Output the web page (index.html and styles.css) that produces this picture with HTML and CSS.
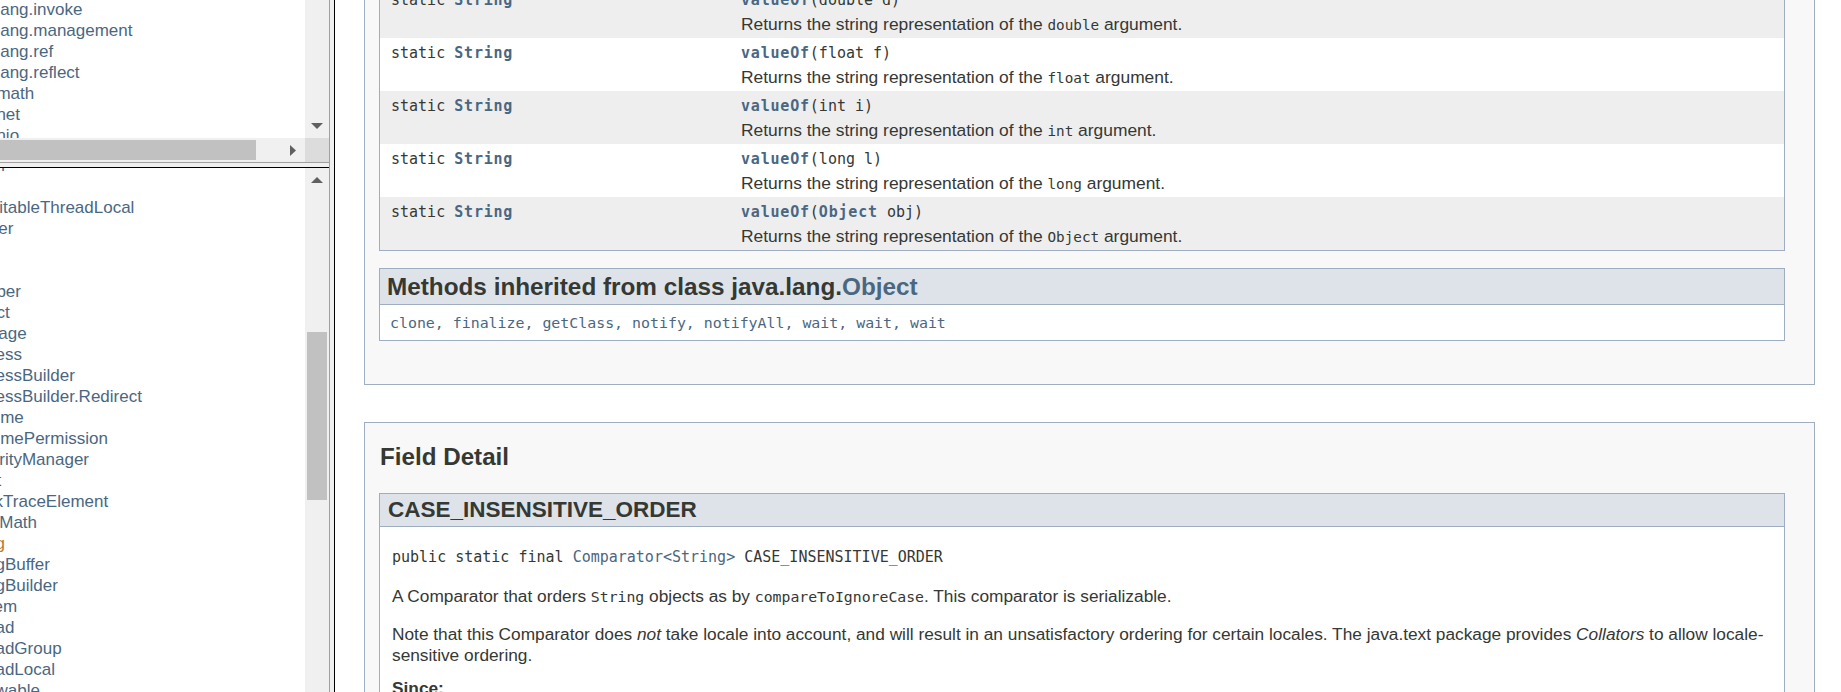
FILE: index.html
```html
<!DOCTYPE html>
<html>
<head>
<meta charset="utf-8">
<title>String (Java Platform SE 8)</title>
<link rel="stylesheet" href="styles.css">
</head>
<body>
<div class="left">
  <div class="frame pkg">
    <div class="view">
      <ul class="list pkg-list">
        <li>java.lang.invoke</li>
        <li>java.lang.management</li>
        <li>java.lang.ref</li>
        <li>java.lang.reflect</li>
        <li>java.math</li>
        <li>java.net</li>
        <li>java.nio</li>
      </ul>
    </div>
    <div class="vbar">
      <div class="spacer"></div>
      <div class="btn"><svg width="12" height="6" viewBox="0 0 12 6"><path d="M0 0H12L6 6Z" fill="#606060"/></svg></div>
    </div>
    <div class="hbar">
      <div class="hthumb"></div>
      <div class="btn hbtn"><svg width="6" height="11" viewBox="0 0 6 11"><path d="M0 0L6 5.5L0 11Z" fill="#606060"/></svg></div>
    </div>
    <div class="corner"></div>
  </div>
  <div class="hdiv"></div>
  <div class="frame cls">
    <div class="view">
      <ul class="list cls-list">
        <li>Enum</li>
        <li>Float</li>
        <li>InheritableThreadLocal</li>
        <li>Integer</li>
        <li>Long</li>
        <li>Math</li>
        <li>Number</li>
        <li>Object</li>
        <li>Package</li>
        <li>Process</li>
        <li>ProcessBuilder</li>
        <li>ProcessBuilder.Redirect</li>
        <li>Runtime</li>
        <li>RuntimePermission</li>
        <li>SecurityManager</li>
        <li>Short</li>
        <li>StackTraceElement</li>
        <li>StrictMath</li>
        <li class="cur">String</li>
        <li>StringBuffer</li>
        <li>StringBuilder</li>
        <li>System</li>
        <li>Thread</li>
        <li>ThreadGroup</li>
        <li>ThreadLocal</li>
        <li>Throwable</li>
        <li>Void</li>
      </ul>
    </div>
    <div class="vbar">
      <div class="btn"><svg width="12" height="6" viewBox="0 0 12 6"><path d="M6 0L12 6H0Z" fill="#606060"/></svg></div>
      <div class="vtrack"><div class="vthumb"></div></div>
    </div>
  </div>
</div>
<div class="vdiv"></div>
<div class="main">
  <div class="block summary-block">
    <div class="summary">
      <div class="row alt">
        <div class="cell c1"><code class="tcode">static <span class="lnk b">String</span></code></div>
        <div class="cell c2"><code class="tcode"><span class="lnk b">valueOf</span>(double&nbsp;d)</code>
          <div class="desc">Returns the string representation of the <code class="icode">double</code> argument.</div></div>
      </div>
      <div class="row">
        <div class="cell c1"><code class="tcode">static <span class="lnk b">String</span></code></div>
        <div class="cell c2"><code class="tcode"><span class="lnk b">valueOf</span>(float&nbsp;f)</code>
          <div class="desc">Returns the string representation of the <code class="icode">float</code> argument.</div></div>
      </div>
      <div class="row alt">
        <div class="cell c1"><code class="tcode">static <span class="lnk b">String</span></code></div>
        <div class="cell c2"><code class="tcode"><span class="lnk b">valueOf</span>(int&nbsp;i)</code>
          <div class="desc">Returns the string representation of the <code class="icode">int</code> argument.</div></div>
      </div>
      <div class="row">
        <div class="cell c1"><code class="tcode">static <span class="lnk b">String</span></code></div>
        <div class="cell c2"><code class="tcode"><span class="lnk b">valueOf</span>(long&nbsp;l)</code>
          <div class="desc">Returns the string representation of the <code class="icode">long</code> argument.</div></div>
      </div>
      <div class="row alt">
        <div class="cell c1"><code class="tcode">static <span class="lnk b">String</span></code></div>
        <div class="cell c2"><code class="tcode"><span class="lnk b">valueOf</span>(<span class="lnk b">Object</span>&nbsp;obj)</code>
          <div class="desc">Returns the string representation of the <code class="icode">Object</code> argument.</div></div>
      </div>
    </div>
    <div class="inherited">
      <h3 class="ihead">Methods inherited from class java.lang.<span class="lnk">Object</span></h3>
      <div class="ibody"><code class="ilist">clone, finalize, getClass, notify, notifyAll, wait, wait, wait</code></div>
    </div>
  </div>

  <div class="block detail-block">
    <h3 class="dhead">Field Detail</h3>
    <div class="field">
      <h4 class="fhead">CASE_INSENSITIVE_ORDER</h4>
      <div class="fbody">
        <pre class="sig">public static final <span class="lnk">Comparator&lt;String&gt;</span> CASE_INSENSITIVE_ORDER</pre>
        <div class="para first">A Comparator that orders <code class="pcode">String</code> objects as by <code class="pcode">compareToIgnoreCase</code>. This comparator is serializable.</div>
        <p class="para note">Note that this Comparator does <i>not</i> take locale into account, and will result in an unsatisfactory ordering for certain locales. The java.text package provides <i>Collators</i> to allow locale-sensitive ordering.</p>
        <dl class="since">
          <dt>Since:</dt>
          <dd>1.2</dd>
        </dl>
      </div>
    </div>
  </div>
</div>
</body>
</html>
```
FILE: styles.css
```css
* { box-sizing: border-box; }
html, body { margin: 0; padding: 0; }
body {
  display: flex;
  height: 692px;
  overflow: hidden;
  background: #ffffff;
  font-family: "Liberation Sans", Arial, sans-serif;
  color: #353833;
}

/* ---------- left frames ---------- */
.left {
  width: 329px;
  flex: none;
  display: flex;
  flex-direction: column;
}
.frame {
  display: grid;
  grid-template-columns: 305px 24px;
  overflow: hidden;
}
.pkg {
  height: 162px;
  flex: none;
  grid-template-rows: 138px 24px;
}
.cls {
  flex: 1;
  grid-template-rows: 1fr;
}
.view {
  overflow: hidden;
  background: #ffffff;
}
.list {
  list-style: none;
  margin: 0 0 0 -39.5px;
  padding: 0;
  font-size: 17px;
  line-height: 21px;
  white-space: nowrap;
  color: #4a6782;
}
.pkg-list { margin-top: -1px; }
.cls-list { margin-top: -13px; }
.list .cur { color: #bb7a2a; }

.vbar {
  background: #f0f0f0;
  display: flex;
  flex-direction: column;
}
.spacer { flex: 1; }
.btn {
  height: 24px;
  flex: none;
  display: flex;
  align-items: center;
  justify-content: center;
}
.hbar {
  background: #f0f0f0;
  display: flex;
  align-items: center;
}
.hthumb {
  width: 256px;
  height: 20px;
  background: #c1c1c1;
}
.hbtn {
  width: 24px;
  margin-left: auto;
}
.corner { background: #dcdcdc; }
.vtrack { flex: 1; }
.vthumb {
  margin: 140px 2px 0;
  height: 168px;
  background: #c1c1c1;
}
.hdiv {
  height: 6px;
  flex: none;
  background: #f0f0f0;
  border-top: 1px solid #a0a0a0;
  border-bottom: 1px solid #000000;
}
.vdiv {
  width: 6px;
  flex: none;
  background: #f0f0f0;
  border-left: 1px solid #a0a0a0;
  border-right: 1px solid #000000;
}

/* ---------- main frame ---------- */
.main {
  flex: 1;
  min-width: 0;
  overflow: hidden;
  padding: 0 26px 0 29px;
  background: #ffffff;
}
.block {
  background: #f8f8f8;
  border: 1px solid #9eadc0;
}
.summary-block {
  margin-top: -16px;
  padding: 0 29px 43px 14px;
}
.summary {
  border: 1px solid #9eadc0;
  border-top: none;
}
.row {
  display: grid;
  grid-template-columns: 350px 1fr;
  height: 53px;
  background: #ffffff;
}
.row.alt { background: #eeeeef; }
.cell {
  padding: 5px 0 0 11px;
  line-height: 20px;
  white-space: nowrap;
}
.tcode {
  font-family: "DejaVu Sans Mono", "Liberation Mono", monospace;
  font-size: 15px;
}
.desc {
  margin-top: 4px;
  font-size: 17.4px;
  line-height: 20px;
}
.icode {
  font-family: "DejaVu Sans Mono", "Liberation Mono", monospace;
  font-size: 14.3px;
}
.lnk { color: #4a6782; }
.b {
  font-weight: bold;
  letter-spacing: 0.8px;
}

.inherited {
  margin-top: 17px;
  border: 1px solid #9eadc0;
  background: #ffffff;
}
.ihead {
  margin: 0;
  height: 36px;
  padding-left: 7px;
  background: #dee3e9;
  border-bottom: 1px solid #9eadc0;
  font-size: 24.3px;
  line-height: 35px;
  font-weight: bold;
  white-space: nowrap;
}
.ibody {
  height: 35px;
  line-height: 35px;
  padding-left: 10px;
}
.ilist {
  font-family: "DejaVu Sans Mono", "Liberation Mono", monospace;
  font-size: 14.9px;
  color: #4a6782;
}

.detail-block {
  margin-top: 37px;
  padding: 20px 29px 0 14px;
}
.dhead {
  margin: 0 0 22px 1px;
  font-size: 24.2px;
  line-height: 28px;
  font-weight: bold;
}
.field {
  border: 1px solid #9eadc0;
  background: #ffffff;
}
.fhead {
  margin: 0;
  height: 33px;
  padding-left: 8px;
  background: #dee3e9;
  border-bottom: 1px solid #9eadc0;
  font-size: 22.5px;
  line-height: 32px;
  font-weight: bold;
}
.fbody {
  padding: 0 6px 20px 12px;
}
.sig {
  margin: 20px 0 0;
  font-family: "DejaVu Sans Mono", "Liberation Mono", monospace;
  font-size: 15px;
  line-height: 20px;
}
.para {
  font-size: 17.3px;
  line-height: 21px;
}
.para.first { margin-top: 19px; }
.para.note { margin: 17px 0 0; }
.pcode {
  font-family: "DejaVu Sans Mono", "Liberation Mono", monospace;
  font-size: 14.8px;
}
.since {
  margin: 12px 0 0;
  font-size: 17.3px;
  line-height: 21px;
}
.since dt { font-weight: bold; }
.since dd { margin: 6px 0 0 12px; }
```
